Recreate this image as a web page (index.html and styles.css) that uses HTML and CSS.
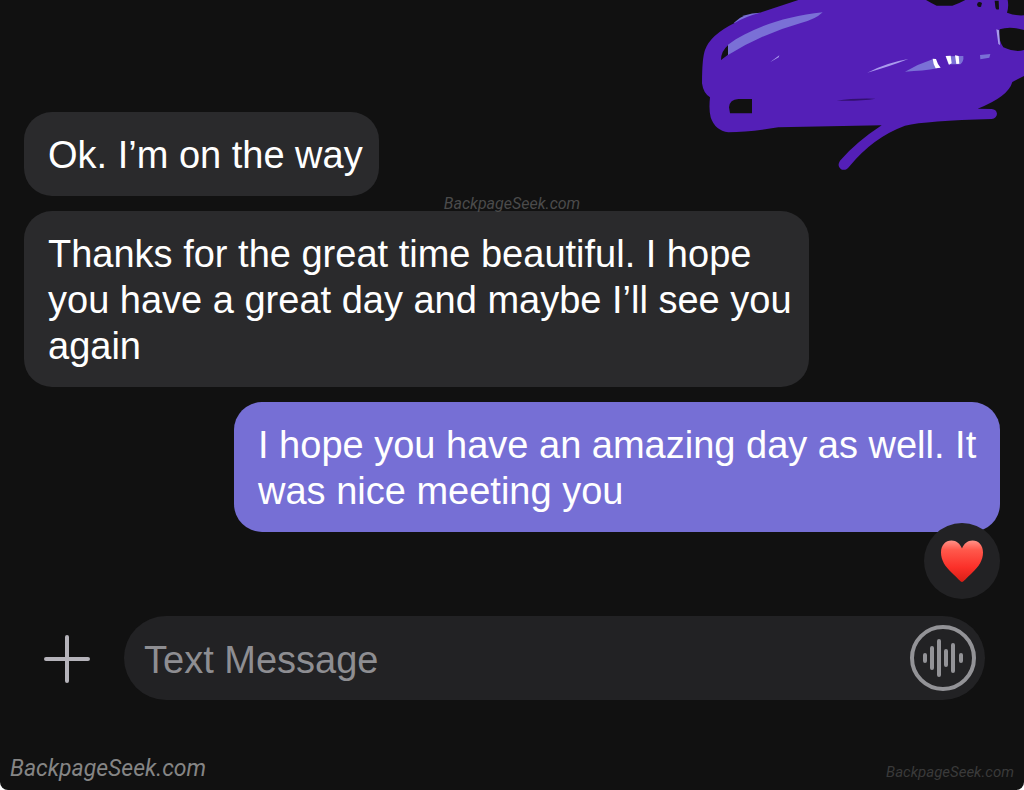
FILE: index.html
```
<!DOCTYPE html>
<html lang="en">
<head>
    <meta charset="UTF-8">
    <meta name="viewport" content="width=device-width, initial-scale=1.0">
    <title>Messages</title>
    <link rel="stylesheet" href="styles.css">
</head>
<body>
    <main class="chat">
        <!-- scribbled out message -->
        <svg class="scribble" viewBox="0 0 1002 540" aria-hidden="true">
            <path fill="#7a70d6" d="M132 68Q160 38 210 38L230 50 150 85Z"/>
            <path fill="#541fb7" fill-rule="evenodd" d="M325 0L210 38Q165 50 135 68Q60 105 45 150Q36 175 36 250Q40 280 60 292Q56 330 62 352Q75 392 115 397Q180 396 265 382L575 376Q500 425 450 482Q440 498 453 508Q468 514 480 497Q550 412 645 377Q710 362 905 357Q920 354 921 341Q919 328 905 327L863 326Q955 290 967 246L1002 228V150Q975 158 940 142Q924 120 929 88Q960 78 1002 90V46Q975 48 951 38Q957 18 953 0H826Q808 10 787 17H740Q725 10 708 0ZM93 180Q93 154 114 136V164ZM117 322Q119 298 145 297H186V340H120ZM863 8Q868 3 876 9L873 20Q863 24 861 14ZM914 2H926L927 28Q917 31 916 20Z"/>
            <path fill="#7a70d6" d="M114 134C180 85 280 50 398 37Q375 59 335 68Q220 100 114 165Z"/>
            <path fill="#7a70d6" d="M645 215Q685 192 728 178L742 205Q700 213 645 215ZM767 169L820 168Q822 184 811 193H775ZM870 165L901 162 898 173 871 178Z"/>
            <path fill="#fff" d="M728 176L738 177Q743 194 752 203L737 205Q729 190 728 176ZM767 168L782 167 785 190 777 194ZM795 166L806 168 808 191 799 192Z"/>
            <path fill="#aa9bed" d="M532 218Q590 188 655 177Q600 199 532 218ZM240 187L268 166 266 172ZM919 88L927 91 930 135 925 132Z"/>
            <path fill="#32106f" d="M440 302Q490 294 557 296Q510 304 440 302Z"/>
        </svg>

        <div class="messages">
            <div class="bubble received">Ok. I’m on the way</div>
            <div class="bubble received">Thanks for the great time beautiful. I hope you have a great day and maybe I’ll see you again</div>
            <div class="bubble sent">
                I hope you have an amazing day as well. It was nice meeting you
                <span class="reaction">
                    <svg viewBox="0 0 44 42" role="img" aria-label="Heart">
                        <defs>
                            <linearGradient id="heart" x1="0" y1="0" x2="0" y2="1">
                                <stop offset="0" stop-color="#ff9287"/>
                                <stop offset="0.22" stop-color="#ff594c"/>
                                <stop offset="0.65" stop-color="#fb3029"/>
                                <stop offset="1" stop-color="#d91f16"/>
                            </linearGradient>
                        </defs>
                        <path fill="url(#heart)" d="M22 42C20.500 42 17 37.500 12 33C5 26.500 1 20 1 12.500C1 5 5.500 0.500 11.500 0.500C16.500 0.500 20 3.500 22 8.500C24 3.500 27.500 0.500 32.500 0.500C38.500 0.500 43 5 43 12.500C43 20 39 26.500 32 33C27 37.500 23.500 42 22 42Z"/>
                    </svg>
                </span>
            </div>
        </div>

        <form class="composer">
            <button type="button" class="add-button" aria-label="Add attachment">
                <svg viewBox="0 0 48 50" fill="none" stroke="currentColor" stroke-width="4" stroke-linecap="round">
                    <path d="M24 4V48M3 26H45"/>
                </svg>
            </button>
            <div class="field">
                <input type="text" placeholder="Text Message" aria-label="Text Message">
                <button type="button" class="audio-button" aria-label="Record audio">
                    <svg viewBox="0 0 68 68" fill="none" stroke="currentColor" stroke-width="4" stroke-linecap="round">
                        <circle cx="34" cy="34" r="31"/>
                        <path d="M16 31V37M23 24V44M30 17V51M37 27V41M44 21V47M52 31V37"/>
                    </svg>
                </button>
            </div>
        </form>

        <span class="watermark middle">BackpageSeek.com</span>
        <span class="watermark left">BackpageSeek.com</span>
        <span class="watermark right">BackpageSeek.com</span>
    </main>
</body>
</html>
```
FILE: styles.css
```
* {
    box-sizing: border-box;
}

body {
    margin: 0;
    background: #fff;
    font-family: "Liberation Sans", Arial, sans-serif;
}

.chat {
    position: relative;
    min-height: 100vh;
    padding-top: 112px;
    background: #111;
    border-radius: 0 0 8px 8px;
    overflow: hidden;
}

.scribble {
    position: absolute;
    top: 0;
    right: 0;
    width: 334px;
    height: 180px;
}

.messages {
    display: flex;
    flex-direction: column;
    gap: 15px;
    padding: 0 24px;
}

.bubble {
    padding: 20px 16px 18px 24px;
    border-radius: 28px;
    color: #fff;
    font-size: 38px;
    line-height: 46px;
}

.received {
    align-self: flex-start;
    max-width: calc(100% - 191px);
    background: #2a2a2c;
}

.sent {
    position: relative;
    align-self: flex-end;
    max-width: calc(100% - 210px);
    background: #766fd5;
}

/* heart badge on the corner of the bubble */
.reaction {
    position: absolute;
    right: 0;
    bottom: -67px;
    display: flex;
    align-items: center;
    justify-content: center;
    width: 76px;
    height: 76px;
    border-radius: 50%;
    background: #222224;
}

.reaction svg {
    width: 44px;
    height: 42px;
}

.composer {
    display: flex;
    align-items: center;
    gap: 33px;
    margin-top: 84px;
    padding: 0 39px 0 43px;
}

button {
    padding: 0;
    border: none;
    background: none;
    cursor: pointer;
}

.add-button {
    width: 48px;
    height: 50px;
    color: #b5b3ba;
}

.add-button svg,
.audio-button svg {
    display: block;
}

.field {
    display: flex;
    flex: 1;
    align-items: center;
    height: 84px;
    padding: 0 8px 0 20px;
    border-radius: 42px;
    background: #222224;
}

.field input {
    flex: 1;
    min-width: 0;
    padding: 4px 0 0;
    border: none;
    outline: none;
    background: none;
    color: #fff;
    font-family: inherit;
    font-size: 38px;
}

.field input::placeholder {
    color: #8e8e92;
    opacity: 1;
}

.audio-button {
    width: 68px;
    height: 68px;
    color: #939397;
}

.watermark {
    position: absolute;
    font-family: Roboto, sans-serif;
    font-style: italic;
}

.middle {
    top: 194px;
    left: 50%;
    transform: translateX(-50%);
    color: #4b4b4b;
    font-size: 16px;
}

.left {
    bottom: 8px;
    left: 10px;
    color: #858585;
    font-size: 23px;
}

.right {
    right: 10px;
    bottom: 9px;
    color: #3a3a3a;
    font-size: 15px;
}
```
